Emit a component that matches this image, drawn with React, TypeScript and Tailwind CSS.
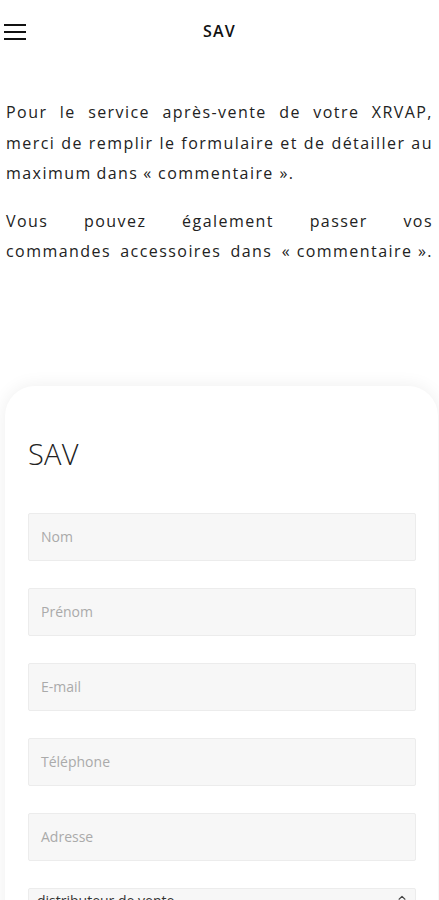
import { ChevronsUpDown } from 'lucide-react'

const fields = ['Nom', 'Prénom', 'E-mail', 'Téléphone', 'Adresse']

const paragraphs = [
  [
    'Pour le service après-vente de votre XRVAP,',
    'merci de remplir le formulaire et de détailler au',
    'maximum dans «\u00a0commentaire\u00a0».',
  ],
  ['Vous pouvez également passer vos', 'commandes accessoires dans «\u00a0commentaire\u00a0».'],
]

const Hamburger = () => (
  <svg width="22" height="16" viewBox="0 0 22 16" className="text-[#111]">
    <rect x="0" y="0" width="22" height="2" fill="currentColor" />
    <rect x="0" y="7" width="22" height="2" fill="currentColor" />
    <rect x="0" y="14" width="22" height="2" fill="currentColor" />
  </svg>
)

// lines that are spread edge to edge, like the justified text in the picture
const Line = ({ text, spread }: { text: string; spread: boolean }) => (
  <div className={`flex whitespace-nowrap ${spread ? 'justify-between' : 'gap-[0.3em]'}`}>
    {text.split(' ').map((w, i) => (
      <span key={i}>{w}</span>
    ))}
  </div>
)

export default function App() {
  return (
    <div className="min-h-[900px] w-[439px] overflow-hidden bg-white font-['Open_Sans',sans-serif] text-[#111]">
      <header className="relative flex h-[62px] items-center justify-center">
        <div className="absolute left-[4px] top-[24px]">
          <Hamburger />
        </div>
        <span className="text-[16px] font-semibold tracking-[0.08em]">SAV</span>
      </header>

      <div className="px-[6px] pt-[35px] text-[16px] leading-[30.5px] tracking-[0.09em] text-[#222]">
        {paragraphs.map((lines, p) => (
          <div key={p} className={p > 0 ? 'mt-[17px]' : ''}>
            {lines.map((l, i) => (
              <Line key={i} text={l} spread={p === 1 || i < lines.length - 1} />
            ))}
          </div>
        ))}
      </div>

      <div className="mt-[119px] ml-[5px] mr-[1px] rounded-[30px] bg-white px-[23px] pt-[50px] pb-10 shadow-[0_0_18px_rgba(0,0,0,0.07)]">
        <h2 className="text-[29px] font-light leading-[36px] tracking-[0.01em] text-[#222]">SAV</h2>
        <div className="mt-[41px] flex w-[388px] flex-col gap-[27px]">
          {fields.map((f) => (
            <div
              key={f}
              className="flex h-[48px] items-center rounded-[2px] border border-[#ececec] bg-[#f7f7f7] px-[12px] text-[14px] text-[#aaa]"
            >
              {f}
            </div>
          ))}
          <div className="flex h-[48px] items-start justify-between rounded-[2px] border border-[#ececec] bg-[#f7f7f7] pl-[8px] pr-[6px] pt-[1px] text-[14px] text-[#333]">
            <span>distributeur de vente</span>
            <ChevronsUpDown size={14} className="mt-[4px] text-[#444]" />
          </div>
        </div>
      </div>
    </div>
  )
}
